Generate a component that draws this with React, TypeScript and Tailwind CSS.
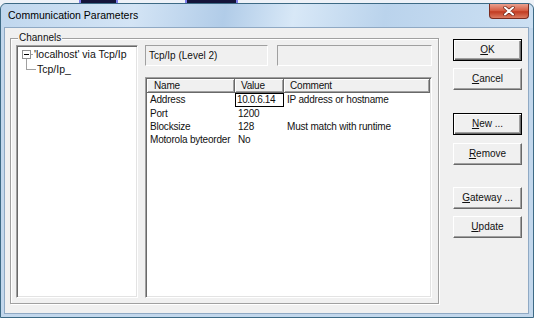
const sunken =
  'border border-t-[#a0a0a0] border-l-[#a0a0a0] border-r-white border-b-white shadow-[inset_1px_1px_0_#696969,inset_-1px_-1px_0_#e3e3e3]'

interface Param {
  name: string
  value: string
  comment: string
}

const params: Param[] = [
  { name: 'Address', value: '10.0.6.14', comment: 'IP address or hostname' },
  { name: 'Port', value: '1200', comment: '' },
  { name: 'Blocksize', value: '128', comment: 'Must match with runtime' },
  { name: 'Motorola byteorder', value: 'No', comment: '' },
]

function DlgButton({ keyChar, rest, isDefault, className }: { keyChar: string; rest: string; isDefault?: boolean; className?: string }) {
  return (
    <div
      className={
        'h-[22px] w-[69px] flex items-center justify-center bg-[#f0f0f0] leading-none text-[#111] ' +
        (isDefault
          ? 'border border-black shadow-[inset_1px_1px_0_#fff,inset_-1px_-1px_0_#696969,inset_-2px_-2px_0_#a0a0a0] '
          : 'border border-t-white border-l-white border-r-[#696969] border-b-[#696969] shadow-[inset_-1px_-1px_0_#a0a0a0] ') +
        (className ?? '')
      }
    >
      <span>
        <span className="underline underline-offset-[1px]">{keyChar}</span>
        {rest}
      </span>
    </div>
  )
}

export default function App() {
  return (
    <div className="w-[534px] h-[318px] overflow-hidden flex flex-col bg-[#eef2f8] font-['Liberation_Sans',Arial,sans-serif] text-[10px] text-[#111]">
      {/* desktop behind the window */}
      <div className="h-[3px] shrink-0 flex">
        <div className="ml-[79px] w-[39px] bg-[#14143a] border-x-2 border-[#7b7bea]" />
        <div className="ml-[67px] w-[53px] bg-[#14143a] border-x-2 border-[#7b7bea]" />
      </div>

      {/* window */}
      <div className="flex-1 flex flex-col border border-[#3d6a85] rounded-t-[6px] bg-[#c2d7ec]">
        {/* title bar */}
        <div className="h-[24px] shrink-0 flex justify-between rounded-t-[6px] bg-[linear-gradient(100deg,#c0d7ee_0%,#d3e4f5_25%,#b1cce8_42%,#d8e8f7_55%,#bad3ec_72%,#cce0f3_100%)]">
          <span className="pl-[7px] pt-[5px] text-[10.5px] leading-[12px] text-black">Communication Parameters</span>
          <div className="mr-[4px] w-[40px] h-[15px] rounded-b-[4px] border border-t-0 border-[#7a2b1f] bg-[linear-gradient(#eaa08f,#d4583e_50%,#c13a20_55%,#dc7a60)] flex items-center justify-center">
            <svg width="12" height="10" viewBox="0 0 12 10">
              <path d="M2 1.5 L10 8.5 M10 1.5 L2 8.5" stroke="#6b2418" strokeWidth="3.4" strokeLinecap="round" />
              <path d="M2 1.5 L10 8.5 M10 1.5 L2 8.5" stroke="#fff" strokeWidth="2" strokeLinecap="round" />
            </svg>
          </div>
        </div>

        {/* client area */}
        <div className="flex-1 ml-[4px] mr-[5px] mb-[4px] bg-[#f0f0f0] shadow-[0_0_0_1px_#8fa9c4] flex pl-[5px] pt-[10px]">
          {/* Channels group */}
          <div className="relative w-[429px] h-[266px] border border-[#a0a0a0] shadow-[inset_1px_1px_0_#fff,1px_1px_0_#fff] flex gap-[7px] pl-[5px] pt-[6px] pr-[6px] pb-[5px]">
            <span className="absolute -top-[7px] left-[7px] px-[1px] bg-[#f0f0f0] leading-[12px]">Channels</span>

            {/* tree */}
            <div className={'w-[122px] bg-white pt-[1px] text-[10.5px] ' + sunken}>
              <div className="h-[15px] flex items-center">
                <div className="ml-[5px] w-[9px] h-[9px] border border-[#919191] bg-white flex items-center justify-center">
                  <div className="w-[5px] h-px bg-black" />
                </div>
                <div className="w-[2px] h-px bg-[#a0a0a0]" />
                <span className="ml-[1px] leading-[15px]">{"'localhost' via Tcp/Ip"}</span>
              </div>
              <div className="h-[15px] flex items-start">
                <div className="ml-[9px] -mt-[3px] w-[10px] h-[11px] border-l border-b border-[#a0a0a0]" />
                <span className="ml-[1px] leading-[15px]">Tcp/Ip_</span>
              </div>
            </div>

            {/* parameters pane */}
            <div className="flex-1 flex flex-col">
              <div className="h-[21px] flex gap-[9px]">
                <div className="w-[123px] flex items-center pl-[3px] border border-t-[#a0a0a0] border-l-[#a0a0a0] border-r-white border-b-white">
                  Tcp/Ip (Level 2)
                </div>
                <div className="flex-1 border border-t-[#a0a0a0] border-l-[#a0a0a0] border-r-white border-b-white" />
              </div>

              <div className={'mt-[11px] flex-1 bg-white tracking-[-0.2px] ' + sunken + ' p-[1px]'}>
                <div className="h-[14px] flex leading-[13px]">
                  <div className="w-[88px] pl-[7px] bg-[#f0f0f0] border-r border-b border-[#696969] shadow-[inset_1px_1px_0_#fff,inset_-1px_-1px_0_#a0a0a0]">Name</div>
                  <div className="w-[49px] pl-[6px] bg-[#f0f0f0] border-r border-b border-[#696969] shadow-[inset_1px_1px_0_#fff,inset_-1px_-1px_0_#a0a0a0]">Value</div>
                  <div className="flex-1 pl-[6px] bg-[#f0f0f0] border-r border-b border-[#696969] shadow-[inset_1px_1px_0_#fff,inset_-1px_-1px_0_#a0a0a0]">Comment</div>
                </div>
                {params.map((p, i) => (
                  <div key={p.name} className={(i === 0 ? 'h-[14px] leading-[14px]' : 'h-[13px] leading-[13px]') + ' flex whitespace-nowrap'}>
                    <div className="w-[88px] pl-[3px]">{p.name}</div>
                    <div className={'w-[49px] ' + (i === 0 ? 'shadow-[inset_0_0_0_1px_#000] pl-[2px] tracking-[-0.4px]' : 'pl-[3px]')}>{p.value}</div>
                    <div className="flex-1 pl-[3px]">{p.comment}</div>
                  </div>
                ))}
              </div>
            </div>
          </div>

          {/* buttons */}
          <div className="ml-[14px] flex flex-col">
            <DlgButton keyChar="O" rest="K" isDefault className="mt-[1px]" />
            <DlgButton keyChar="C" rest="ancel" className="mt-[7px]" />
            <DlgButton keyChar="N" rest="ew ..." isDefault className="mt-[23px]" />
            <DlgButton keyChar="R" rest="emove" className="mt-[8px]" />
            <DlgButton keyChar="G" rest="ateway ..." className="mt-[22px]" />
            <DlgButton keyChar="U" rest="pdate" className="mt-[7px]" />
          </div>
        </div>
      </div>
    </div>
  )
}
